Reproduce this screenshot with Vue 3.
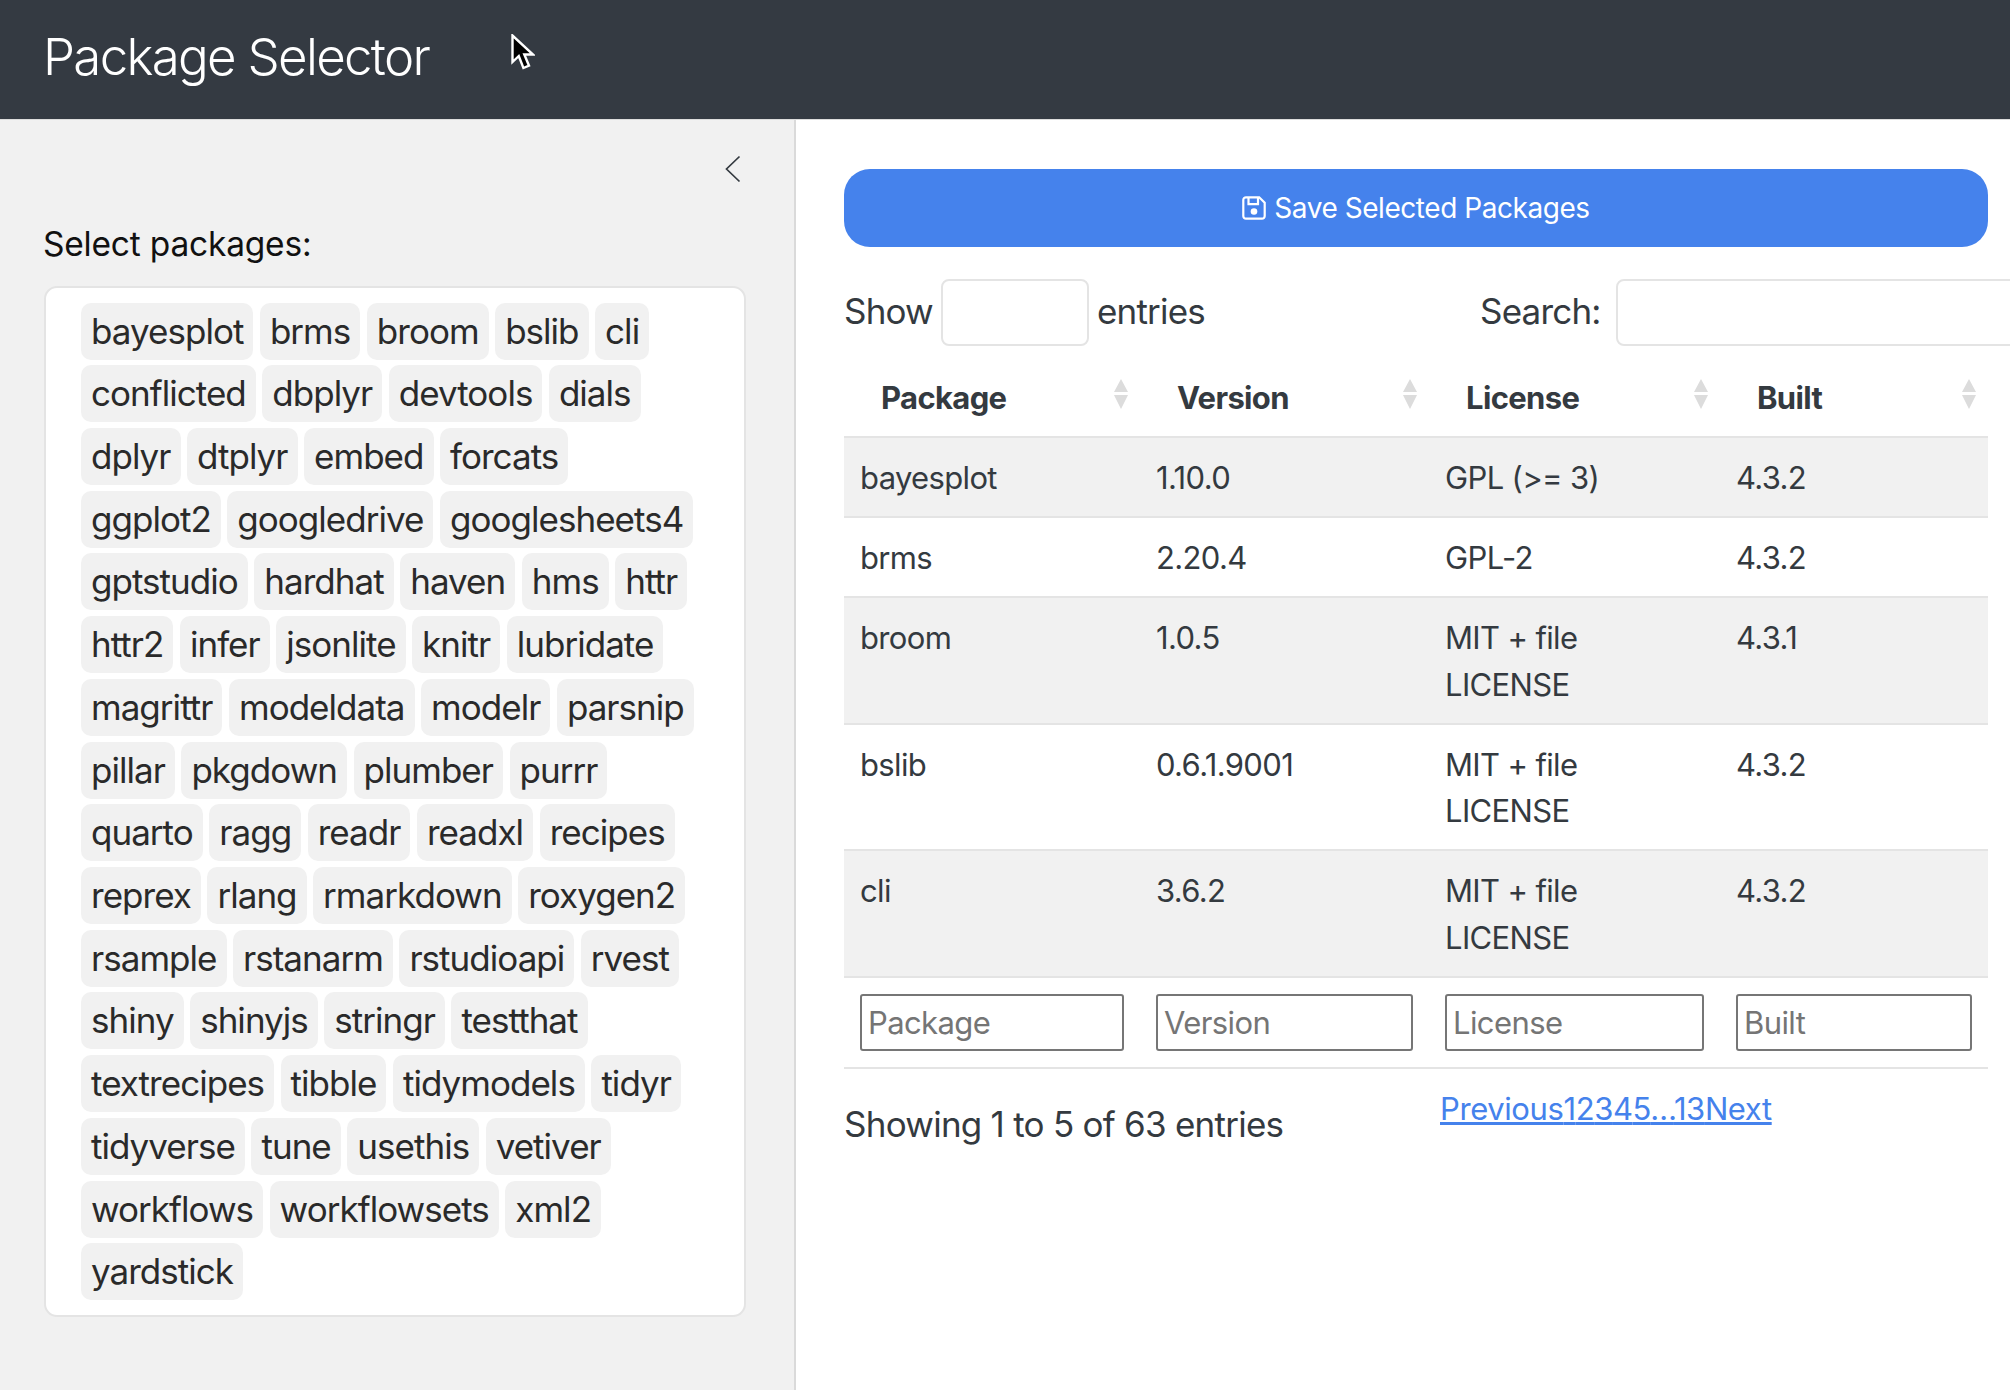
<script setup>
const packages = ['bayesplot','brms','broom','bslib','cli','conflicted','dbplyr','devtools','dials','dplyr','dtplyr','embed','forcats','ggplot2','googledrive','googlesheets4','gptstudio','hardhat','haven','hms','httr','httr2','infer','jsonlite','knitr','lubridate','magrittr','modeldata','modelr','parsnip','pillar','pkgdown','plumber','purrr','quarto','ragg','readr','readxl','recipes','reprex','rlang','rmarkdown','roxygen2','rsample','rstanarm','rstudioapi','rvest','shiny','shinyjs','stringr','testthat','textrecipes','tibble','tidymodels','tidyr','tidyverse','tune','usethis','vetiver','workflows','workflowsets','xml2','yardstick']
const columns = ['Package','Version','License','Built']
const rows = [
  ['bayesplot','1.10.0','GPL (>= 3)','4.3.2'],
  ['brms','2.20.4','GPL-2','4.3.2'],
  ['broom','1.0.5','MIT + file LICENSE','4.3.1'],
  ['bslib','0.6.1.9001','MIT + file LICENSE','4.3.2'],
  ['cli','3.6.2','MIT + file LICENSE','4.3.2'],
]
const pages = ['Previous','1','2','3','4','5','…','13','Next']
</script>

<template>
  <div class="page">
    <header class="topbar">
      <h1 class="title">Package Selector</h1>
      <svg class="cursor" width="24" height="37" viewBox="0 0 24 37"><path d="M1.5 1.5V28l6.3-6 4.6 12 5.6-2.3-4.7-11.2H22Z" fill="#000" stroke="#fff" stroke-width="2.4" stroke-linejoin="miter"/></svg>
    </header>
    <div class="layout">
      <aside class="sidebar">
        <div class="collapse-row">
          <svg width="16" height="28" viewBox="0 0 16 28"><path d="M14.5 1.5 1.5 14l13 12.5" fill="none" stroke="#343a40" stroke-width="1.7"/></svg>
        </div>
        <label class="pick-label">Select packages:</label>
        <div class="picker">
          <span v-for="p in packages" :key="p" class="tag">{{ p }}</span>
        </div>
      </aside>
      <main class="content">
        <button class="save" type="button">
          <svg width="24" height="24" viewBox="0 0 24 24"><path d="M4 1.3h13.2l5.5 5.5V20a2.7 2.7 0 0 1-2.7 2.7H4A2.7 2.7 0 0 1 1.3 20V4A2.7 2.7 0 0 1 4 1.3Z" fill="none" stroke="#fff" stroke-width="2.2"/><path d="M6.5 1.8v6.4h9.5V1.8" fill="none" stroke="#fff" stroke-width="2.2"/><circle cx="12" cy="15.5" r="3.3" fill="#fff"/></svg>
          <span>Save Selected Packages</span>
        </button>
        <div class="controls">
          <div class="length"><span>Show</span><span class="field small"></span><span>entries</span></div>
          <div class="search"><span>Search:</span><span class="field wide"></span></div>
        </div>
        <table class="grid">
          <colgroup><col class="c1"><col class="c2"><col class="c3"><col class="c4"></colgroup>
          <thead>
            <tr>
              <th v-for="c in columns" :key="c">
                <span>{{ c }}</span>
                <svg class="sort" width="16" height="30" viewBox="0 0 16 30"><path d="M8 0 15 13H1Z M1 16H15L8 30Z" fill="#dcdcdc"/></svg>
              </th>
            </tr>
          </thead>
          <tbody>
            <tr v-for="r in rows" :key="r[0]">
              <td v-for="(v, i) in r" :key="i">{{ v }}</td>
            </tr>
          </tbody>
          <tfoot>
            <tr>
              <td v-for="c in columns" :key="c"><input class="filter" :placeholder="c" /></td>
            </tr>
          </tfoot>
        </table>
        <div class="footer">
          <div class="info">Showing 1 to 5 of 63 entries</div>
          <div class="pager"><a v-for="p in pages" :key="p" href="#">{{ p }}</a></div>
        </div>
      </main>
    </div>
  </div>
</template>

<style>
html, body { margin: 0; background: #fff; }
</style>

<style scoped>
.page {
  width: 2010px;
  height: 1390px;
  overflow: hidden;
  font-family: Inter, "Liberation Sans", sans-serif;
  color: #343a40;
  display: flex;
  flex-direction: column;
}
.topbar {
  height: 120px;
  box-sizing: border-box;
  flex: none;
  background: #343a42;
  display: flex;
  align-items: center;
  padding: 0 0 7px 43px;
  position: relative;
  border-bottom: 1px solid #dcdcdc;
}
.title {
  margin: 0;
  font-size: 51px;
  font-weight: 300;
  letter-spacing: -1.7px;
  color: #fff;
}
.cursor { position: absolute; left: 511px; top: 34px; }
.layout { flex: 1; display: flex; min-height: 0; }
.sidebar {
  width: 796px;
  flex: none;
  box-sizing: border-box;
  background: #f1f1f1;
  border-right: 2px solid #dadada;
  padding: 35px 48px 0 44px;
}
.collapse-row { display: flex; justify-content: flex-end; padding-right: 5px; height: 28px; }
.pick-label { display: block; margin: 37px 0 0 -1px; font-size: 33.5px; letter-spacing: -0.2px; line-height: 48px; color: #111; }
.picker {
  margin-top: 18px;
  box-sizing: border-box;
  background: #fff;
  border: 2px solid #e4e4e4;
  border-radius: 13px;
  padding: 14.5px 37px 14.5px 35px;
  display: flex;
  flex-wrap: wrap;
  gap: 5.73px 6.5px;
}
.tag {
  height: 57px;
  line-height: 57px;
  padding: 0 10px;
  background: #f1f1f1;
  border-radius: 10px;
  font-size: 35px;
  letter-spacing: -0.97px;
  color: #2a2a2a;
}
.content { flex: 1; min-width: 0; padding: 49px 22px 0 48px; overflow: hidden; }
.save {
  width: 100%;
  height: 78px;
  border: 0;
  border-radius: 26px;
  background: #4582ec;
  color: #fff;
  font: 400 28px Inter, sans-serif;
  letter-spacing: -0.45px;
  display: flex;
  align-items: center;
  justify-content: center;
  gap: 8px;
}
.controls { display: grid; grid-template-columns: 636px 1fr; margin-top: 32px; font-size: 35px; letter-spacing: -0.8px; height: 67px; align-items: center; }
.length, .search { display: flex; align-items: center; gap: 8px; }
.length > span:not(.field), .search > span:not(.field) { position: relative; top: -2px; }
.search { gap: 15px; }
.field { display: block; height: 67px; box-sizing: border-box; border: 2px solid #e4e4e4; border-radius: 8px; background: #fff; flex: none; }
.small { width: 148px; }
.wide { width: 500px; }
.grid { width: 1144px; margin-top: 20px; border-collapse: collapse; table-layout: fixed; font-size: 31px; line-height: 46.5px; letter-spacing: -0.65px; }
.c1 { width: 296px; } .c2 { width: 289px; } .c3 { width: 291px; } .c4 { width: 268px; }
th { position: relative; height: 70px; padding: 0 0 0 37px; text-align: left; font-weight: 700; }
th span { position: relative; top: -3px; }
.sort { position: absolute; right: 11px; top: 13px; }
td { padding: 17px 16px 14.5px; vertical-align: top; }
tbody tr { border-top: 2px solid #e4e4e4; }
tbody tr:nth-child(odd) { background: #f1f1f1; }
tfoot tr { border-top: 2px solid #e4e4e4; border-bottom: 2px solid #e4e4e4; }
tfoot td { height: 57px; padding: 16px; }
.filter {
  display: block;
  width: 100%;
  height: 57px;
  box-sizing: border-box;
  border: 2px solid #767676;
  border-radius: 3px;
  padding: 0 6px;
  background: #fff;
  font: 400 31px Inter, sans-serif;
  letter-spacing: -0.6px;
}
.filter::placeholder { color: #757575; opacity: 1; }
.footer { display: flex; margin-top: 17px; }
.info { width: 596px; flex: none; font-size: 35px; letter-spacing: -0.75px; line-height: 52px; margin-top: 12px; }
.pager { font-size: 31px; letter-spacing: -0.4px; line-height: 46px; }
.pager a { color: #4582ec; text-decoration: underline; }
</style>
